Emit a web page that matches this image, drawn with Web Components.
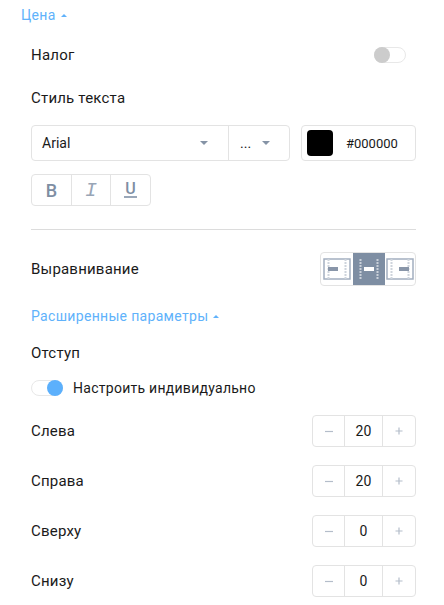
<!DOCTYPE html>
<html>
<head>
<meta charset="utf-8">
<style>
  html, body { margin: 0; padding: 0; background: #fff; }
  body { width: 444px; height: 605px; overflow: hidden; font-family: Roboto, "Liberation Sans", sans-serif; color: #1a1a1a; }
  settings-panel { display: block; }
</style>
</head>
<body>
<settings-panel></settings-panel>
<script>
(function() {

  class FoldTitle extends HTMLElement {
    constructor() {
      super();
      this.attachShadow({ mode: 'open' });
      this.shadowRoot.innerHTML = `
      <style>
        :host { display: flex; align-items: center; gap: 5px; height: 20px; font-size: 14px; color: #60b2fb; letter-spacing: .32px; }
        i { width: 0; height: 0; border: 3.5px solid transparent; border-top: 0; border-bottom: 3.5px solid #60b2fb; }
      </style>
      <slot></slot><i></i>`;
    }
  }
  customElements.define('fold-title', FoldTitle);

  class ToggleSwitch extends HTMLElement {
    constructor() {
      super();
      this.attachShadow({ mode: 'open' });
      this.shadowRoot.innerHTML = `
      <style>
        :host { display: flex; width: 32px; height: 16px; box-sizing: border-box; border: 1px solid #e8e8e8; border-radius: 8px; position: relative; flex: none; background: #fff; }
        b { position: absolute; left: -1px; top: -1px; width: 16px; height: 16px; border-radius: 50%; background: #cccccc; }
        :host([on]) b { left: auto; right: -1px; background: #5cb0fc; }
      </style>
      <b></b>`;
    }
  }
  customElements.define('toggle-switch', ToggleSwitch);

  class DropSelect extends HTMLElement {
    constructor() {
      super();
      this.attachShadow({ mode: 'open' });
      this.shadowRoot.innerHTML = `
      <style>
        :host { display: flex; align-items: center; box-sizing: border-box; height: 100%; font-size: 14px; color: #1a1a1a; }
        span { flex: 1; }
        i { width: 0; height: 0; border: 4.5px solid transparent; border-bottom: 0; border-top: 4.5px solid #8593a6; margin-top: -1px; }
      </style>
      <span><slot></slot></span><i></i>`;
    }
  }
  customElements.define('drop-select', DropSelect);

  class NumStepper extends HTMLElement {
    constructor() {
      super();
      this.attachShadow({ mode: 'open' });
      this.shadowRoot.innerHTML = `
      <style>
        :host { display: grid; grid-template-columns: 31px 1fr 32px; width: 104px; height: 32px; box-sizing: border-box; border: 1px solid #e3e3e3; border-radius: 4px; font-size: 14px; color: #1a1a1a; flex: none; }
        div { display: flex; align-items: center; justify-content: center; }
        .val { border-left: 1px solid #e3e3e3; border-right: 1px solid #e3e3e3; }
        svg { display: block; }
      </style>
      <div><svg width="10" height="10"><path d="M1 5.5h8" stroke="#b4bdca" stroke-width="1.2"/></svg></div>
      <div class="val"><slot></slot></div>
      <div><svg width="10" height="10"><path d="M1.5 5h7M5 1.5v7" stroke="#b4bdca" stroke-width="1.2"/></svg></div>`;
    }
  }
  customElements.define('num-stepper', NumStepper);

  class FieldRow extends HTMLElement {
    constructor() {
      super();
      this.attachShadow({ mode: 'open' });
      this.shadowRoot.innerHTML = `
      <style>
        :host { display: flex; align-items: center; justify-content: space-between; font-size: 15px; color: #1a1a1a; letter-spacing: .2px; }
      </style>
      <span><slot></slot></span><slot name="control"></slot>`;
    }
  }
  customElements.define('field-row', FieldRow);

  class FormatButtons extends HTMLElement {
    constructor() {
      super();
      this.attachShadow({ mode: 'open' });
      this.shadowRoot.innerHTML = `
      <style>
        :host { display: grid; grid-template-columns: 39px 39px 1fr; width: 120px; height: 32px; box-sizing: border-box; border: 1px solid #e3e3e3; border-radius: 4px; color: #7e8ea3; }
        div { display: flex; align-items: center; justify-content: center; line-height: 1; }
        div + div { border-left: 1px solid #e3e3e3; }
        .b { font: 500 18px Roboto, sans-serif; }
        .i { font: italic 400 20px "Liberation Mono", monospace; color: #98a5b6; }
        .u span { font: 500 16px/13px Roboto, sans-serif; border-bottom: 2px solid #9aa7b8; padding: 0 1px 1px; }
      </style>
      <div class="b">B</div><div class="i">I</div><div class="u"><span>U</span></div>`;
    }
  }
  customElements.define('format-buttons', FormatButtons);

  class AlignButtons extends HTMLElement {
    constructor() {
      super();
      this.attachShadow({ mode: 'open' });
      const icon = (x, bar, dots, frame) => `
        <svg width="28" height="22" viewBox="0 0 28 22">
          ${frame ? `<path d="M1 1h26v20H1z" fill="none" stroke="#a3afc0" stroke-width="1.5"/>` : ''}
          <path d="M5.5 1v20M22.5 1v20" stroke="${dots}" stroke-width="2" stroke-dasharray="2 1"/>
          <rect x="${x}" y="9" width="10" height="4" fill="${frame ? bar : '#fff'}"/>
        </svg>`;
      this.shadowRoot.innerHTML = `
      <style>
        :host { display: grid; grid-template-columns: 32px 32px 1fr; width: 96px; height: 34px; box-sizing: border-box; border: 1px solid #e3e3e3; border-radius: 4px; flex: none; }
        div { display: flex; align-items: center; justify-content: center; }
        .on { background: #7e8ea3; }
        svg { display: block; }
      </style>
      <div>${icon(5, '#8996a9', '#ced4dc', true)}</div>
      <div class="on">${icon(9, '#fff', '#c9d0d9', false)}</div>
      <div>${icon(13, '#8996a9', '#ced4dc', true)}</div>`;
    }
  }
  customElements.define('align-buttons', AlignButtons);

  class SettingsPanel extends HTMLElement {
    constructor() {
      super();
      this.attachShadow({ mode: 'open' });
      const row = (label, val) => `<field-row class="st">${label}<num-stepper slot="control">${val}</num-stepper></field-row>`;
      this.shadowRoot.innerHTML = `
      <style>
        :host { display: block; box-sizing: border-box; width: 444px; padding: 5px 28px 0 31px; }
        .top { margin-left: -10px; }
        .tax { margin-top: 20px; height: 20px; }
        .tax toggle-switch { margin-right: 10px; }
        .style { margin-top: 23px; height: 20px; }
        .fonts { display: flex; gap: 11px; margin-top: 17px; height: 36px; }
        .font { display: grid; grid-template-columns: 196px 1fr; width: 259px; box-sizing: border-box; border: 1px solid #e3e3e3; border-radius: 4px; }
        .font drop-select { padding: 0 20px 0 10px; }
        .font drop-select + drop-select { border-left: 1px solid #e3e3e3; padding: 0 19px 0 11px; }
        .color { flex: 1; display: flex; align-items: center; box-sizing: border-box; border: 1px solid #e3e3e3; border-radius: 4px; padding: 0 5px; font-size: 13px; color: #1a1a1a; }
        .color b { width: 26px; height: 26px; border-radius: 4px; background: #000; margin-right: 13px; }
        format-buttons { margin-top: 13px; }
        hr { border: 0; border-top: 1px solid #dcdcdc; margin: 23px 0 0; }
        .align { margin-top: 22px; height: 34px; }
        .adv { margin-top: 20px; }
        .pad { margin-top: 17px; height: 20px; }
        .ind { display: flex; align-items: center; gap: 10px; margin-top: 15px; height: 20px; font-size: 14px; color: #1a1a1a; letter-spacing: .27px; }
        .st { height: 32px; margin-top: 18px; }
        .st.first { margin-top: 17px; }
      </style>
      <fold-title class="top">Цена</fold-title>
      <field-row class="tax">Налог<toggle-switch slot="control"></toggle-switch></field-row>
      <field-row class="style">Стиль текста</field-row>
      <div class="fonts">
        <div class="font"><drop-select>Arial</drop-select><drop-select>...</drop-select></div>
        <div class="color"><b></b>#000000</div>
      </div>
      <format-buttons></format-buttons>
      <hr>
      <field-row class="align">Выравнивание<align-buttons slot="control"></align-buttons></field-row>
      <fold-title class="adv">Расширенные параметры</fold-title>
      <field-row class="pad">Отступ</field-row>
      <div class="ind"><toggle-switch on></toggle-switch>Настроить индивидуально</div>
      <field-row class="st first">Слева<num-stepper slot="control">20</num-stepper></field-row>
      ${row('Справа', 20)}
      ${row('Сверху', 0)}
      ${row('Снизу', 0)}`;
    }
  }
  customElements.define('settings-panel', SettingsPanel);

})();
</script>
</body>
</html>
